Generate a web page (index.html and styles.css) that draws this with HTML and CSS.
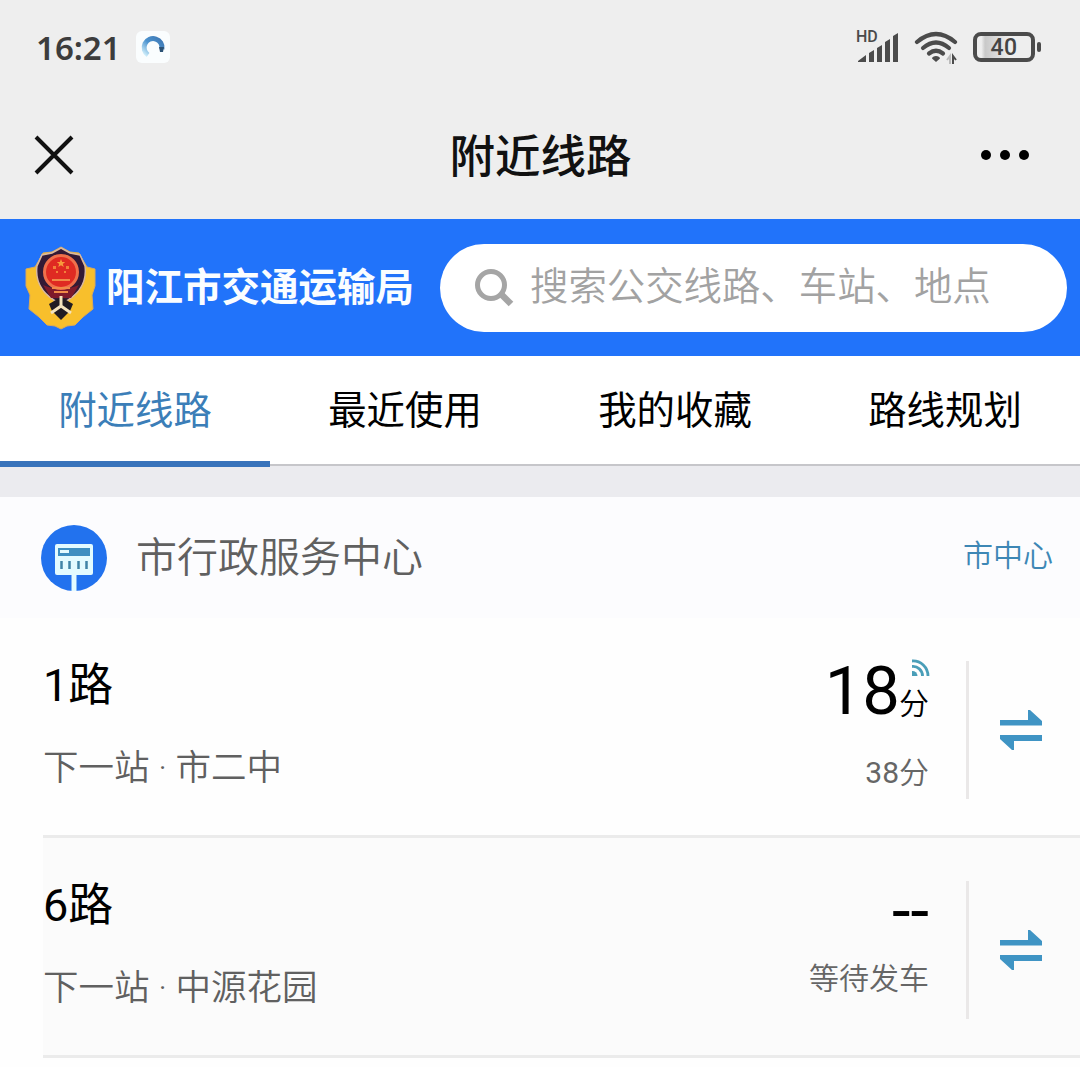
FILE: index.html
```html
<!doctype html>
<html lang="zh-CN">
<head>
    <meta charset="UTF-8">
    <meta name="viewport" content="width=device-width, initial-scale=1.0">
    <title>附近线路</title>
    <link rel="stylesheet" href="styles.css">
</head>
<body>
    <div class="status">
        <span class="time">16:21</span>
        <span class="app">
            <svg width="34" height="32" viewBox="0 0 34 32">
                <defs>
                    <linearGradient id="ring" x1="0" y1="1" x2="1" y2="0">
                        <stop offset="0" stop-color="#d5f2fc"/>
                        <stop offset=".5" stop-color="#4b93cf"/>
                        <stop offset="1" stop-color="#3f78b4"/>
                    </linearGradient>
                </defs>
                <path d="M12 24A9 9 0 1 1 26 18" fill="none" stroke="url(#ring)" stroke-width="5"/>
                <path d="M23 16h5l-1 5h-3z" fill="#2c5275"/>
            </svg>
        </span>
        <div class="signs">
            <svg class="signal" width="44" height="36" viewBox="0 0 44 36">
                <text x="0" y="13" class="hd">HD</text>
                <path d="M2 33v-1l8-6v7zM13 33v-9l5-3v12zM21 33V19l5-3v17zM29 33V13l5-3v23zM37 33V7l5-3v29z" fill="#4b4b4b"/>
            </svg>
            <svg class="wifi" width="44" height="34" viewBox="0 0 44 34">
                <g fill="none" stroke="#4b4b4b" stroke-width="4.2" stroke-linecap="round">
                    <path d="M3 12Q22-4 41 12"/>
                    <path d="M9 18Q22 7 35 18"/>
                    <path d="M15 23.500Q22 18 29 23.500"/>
                </g>
                <path d="M22 26c2 0 4 1 4 2.500L22 32l-4-3.500c0-1.500 2-2.500 4-2.500z" fill="#4b4b4b"/>
                <path d="M36 34v-8l-3 4" fill="none" stroke="#bbb" stroke-width="2"/>
                <path d="M39 34v-8l3 4" fill="none" stroke="#4b4b4b" stroke-width="2"/>
            </svg>
            <div class="battery"><span>40</span></div>
            <i class="cap"></i>
        </div>
    </div>

    <div class="title">
        <svg class="close" width="40" height="40" viewBox="0 0 40 40">
            <path d="M2 2l36 36M38 2L2 38" stroke="#111" stroke-width="4"/>
        </svg>
        <h1>附近线路</h1>
        <div class="more"><i></i><i></i><i></i></div>
    </div>

    <div class="header">
        <svg class="logo" width="72" height="84" viewBox="0 0 72 84">
            <path d="M36 1l9 5 9 1 5 9 3 5 8 2v17l-3 9 1 14-10 8-8 8-8 1-6 3-6-3-8-1-8-8-10-8 1-14-4-9V23l9-2 3-5 5-9 9-1z" fill="#f8bf2c" stroke="#dbaa58" stroke-width="1"/>
            <path d="M36 2l9 5 10 2 5 11c2 15-5 29-24 38C17 49 10 35 12 20l5-11 10-2z" fill="#331a35" stroke="#d9b8a0" stroke-width="1.500"/>
            <path d="M18 39q18 8 36 0l-8 13H26z" fill="#7e1a2b"/>
            <circle cx="36" cy="26" r="16.500" fill="#df2a22" stroke="#f0704b" stroke-width="3"/>
            <path d="M36 13l1.200 3h3l-2.400 2 1 3-2.800-1.800-2.800 1.800 1-3-2.400-2h3z" fill="#f79a3c"/>
            <path d="M28 20h3v3h-3zM41 20h3v3h-3zM31 25h2v2h-2zM39 25h2v2h-2z" fill="#f3803a"/>
            <path d="M27 34h18M27 42h18M29 46h14" stroke="#f08a48" stroke-width="2"/>
            <path d="M36 51l12 7-3 7-9 9-9-9-3-7z" fill="#211c22"/>
            <path d="M36 50v11M36 60l-10 7M36 60l10 7" stroke="#f4e3bd" stroke-width="3"/>
        </svg>
        <span class="name">阳江市交通运输局</span>
        <div class="search">
            <svg width="40" height="40" viewBox="0 0 40 40" fill="none" stroke="#a5a5a5">
                <circle cx="17" cy="17" r="13.500" stroke-width="5"/>
                <path d="M27 26l10 10" stroke-width="6.500"/>
            </svg>
            <span>搜索公交线路、车站、地点</span>
        </div>
    </div>

    <ul class="tab">
        <li class="on">附近线路</li>
        <li>最近使用</li>
        <li>我的收藏</li>
        <li>路线规划</li>
    </ul>

    <div class="station">
        <svg width="66" height="66" viewBox="0 0 66 66">
            <circle cx="33" cy="33" r="33" fill="#2272ee"/>
            <rect x="14" y="19" width="38" height="31" rx="2" fill="#e3fbff"/>
            <rect x="17" y="23" width="32" height="8" fill="#3e8fc0"/>
            <path d="M19 26.500h9" stroke="#e3fbff" stroke-width="3"/>
            <path d="M20.500 36v8M28.500 36v8M37.500 36v8M45.500 36v8" stroke="#4084a6" stroke-width="2.500"/>
            <path d="M33 48v18" stroke="#e3fbff" stroke-width="5"/>
        </svg>
        <span class="stop">市行政服务中心</span>
        <span class="area">市中心</span>
    </div>

    <ul class="lines">
        <li>
            <div class="info">
                <h2>1路</h2>
                <p>下一站 · 市二中</p>
            </div>
            <div class="wait">
                <div class="big">18<small>分</small>
                    <svg class="live" width="18" height="18" viewBox="0 0 18 18" fill="none" stroke="#4a9eb8" stroke-width="2.800">
                        <path d="M0 2A15 15 0 0 1 16 17M0 7.500A9.500 9.500 0 0 1 10.500 17"/>
                        <path d="M0 12a5 5 0 0 1 5.500 5H0z" fill="#4a9eb8" stroke="none"/>
                    </svg>
                </div>
                <p><b>38</b>分</p>
            </div>
            <div class="swap">
                <svg width="42" height="42" viewBox="0 0 42 42" fill="#3f94c4">
                    <path d="M0 11h28V1h2l12 11v4.500H0zM42 32H14v9h-2L0 30v-4h42z"/>
                </svg>
            </div>
        </li>
        <li class="gray">
            <div class="info">
                <h2>6路</h2>
                <p>下一站 · 中源花园</p>
            </div>
            <div class="wait">
                <div class="big">--</div>
                <p>等待发车</p>
            </div>
            <div class="swap">
                <svg width="42" height="42" viewBox="0 0 42 42" fill="#3f94c4">
                    <path d="M0 11h28V1h2l12 11v4.500H0zM42 32H14v9h-2L0 30v-4h42z"/>
                </svg>
            </div>
        </li>
    </ul>
</body>
</html>
```
FILE: styles.css
```css
*{
    padding:0;
    margin:0;
    box-sizing:border-box;
}
body{
    width:1080px;
    height:1067px;
    overflow:hidden;
    background:#fefefe;
    font-family:Roboto,"Noto Sans CJK SC",sans-serif;
    color:#000;
}
li{
    list-style:none;
}
svg{
    display:block;
    flex:none;
}
.status{
    display:flex;
    align-items:center;
    height:94px;
    padding:0 39px 0 36px;
    background:#eee;
}
.time{
    width:100px;
    padding-top:1px;
    font:600 33px/40px "Noto Sans",sans-serif;
    color:#3c3c3c;
}
.app{
    width:34px;
    height:32px;
    border-radius:6px;
    background:#fafdfe;
}
.signs{
    display:flex;
    align-items:center;
    margin-left:auto;
}
.signal{
    overflow:visible;
}
.hd{
    font:500 16px Roboto,sans-serif;
    fill:#4b4b4b;
}
.wifi{
    margin:0 15px 0 14px;
}
.battery{
    width:62px;
    height:30px;
    border:4px solid #4b4b4b;
    border-radius:8px;
    background:linear-gradient(90deg,#eee 8%,#c9c9c9 15%,#eee 60%);
    font:500 23px/24px Roboto,sans-serif;
    text-align:center;
    letter-spacing:.5px;
    color:#444;
}
.cap{
    width:4px;
    height:10px;
    margin-left:2px;
    border-radius:2px;
    background:#4b4b4b;
}
.title{
    display:flex;
    align-items:center;
    justify-content:space-between;
    height:125px;
    padding:0 51px 4px 34px;
    background:#eee;
}
.title h1{
    padding:7px 0 0 26px;
    font-size:45.500px;
    font-weight:500;
    line-height:60px;
    color:#111;
}
.more{
    display:flex;
    gap:9px;
}
.more i{
    width:10px;
    height:10px;
    border-radius:50%;
    background:#000;
}
.header{
    display:flex;
    align-items:center;
    height:137px;
    padding:0 13px 0 25px;
    background:#2173fa;
}
.name{
    margin-left:9px;
    padding-top:1px;
    font-size:38.500px;
    font-weight:700;
    line-height:50px;
    color:#fafdff;
}
.search{
    display:flex;
    align-items:center;
    width:627px;
    height:88px;
    margin-left:auto;
    padding-left:34px;
    border-radius:44px;
    background:#fff;
}
.search span{
    margin-left:16px;
    padding-bottom:2px;
    font-size:38.400px;
    line-height:50px;
    font-weight:350;
    color:#a2a2a2;
}
.tab{
    display:flex;
    height:110px;
    border-bottom:2px solid #c6c6ca;
    background:#fff;
}
.tab li{
    width:270px;
    height:111px;
    font-size:38.400px;
    line-height:109px;
    text-align:center;
}
.tab .on{
    border-bottom:6px solid #3873bb;
    color:#3b7eb8;
}
.station{
    display:flex;
    align-items:center;
    height:152px;
    padding:0 27px 0 41px;
    border-top:31px solid #ebebef;
    background:#fcfcfe;
}
.stop{
    margin-left:29px;
    font-size:41px;
    line-height:54px;
    font-weight:350;
    color:#606060;
}
.area{
    margin-left:auto;
    padding-bottom:3px;
    font-size:30px;
    line-height:40px;
    font-weight:350;
    color:#3d87b5;
}
.lines li{
    display:flex;
    height:220px;
    margin-left:43px;
    border-bottom:3px solid #ebebeb;
}
.lines .gray{
    background:#fbfbfb;
}
.info{
    flex:1;
    padding-top:38px;
}
.info h2{
    font-size:45px;
    font-weight:400;
    line-height:60px;
}
.info p{
    margin-top:28px;
    font-size:35.500px;
    line-height:48px;
    font-weight:350;
    color:#606060;
}
.wait{
    padding:35px 37px 0 0;
    text-align:right;
}
.big{
    position:relative;
    height:76px;
    font-size:67px;
    line-height:76px;
}
.big small{
    margin-left:-1px;
    font-size:30px;
    font-weight:350;
}
.live{
    position:absolute;
    right:-1px;
    top:6px;
}
.wait p{
    margin-top:24px;
    font-size:30px;
    line-height:40px;
    font-weight:350;
    color:#666;
}
.wait b{
    font-weight:400;
}
.gray .wait p{
    margin-top:10px;
}
.swap{
    display:flex;
    align-items:center;
    width:114px;
    height:138px;
    margin-top:43px;
    padding-left:31px;
    border-left:3px solid #eae8e8;
}
```
